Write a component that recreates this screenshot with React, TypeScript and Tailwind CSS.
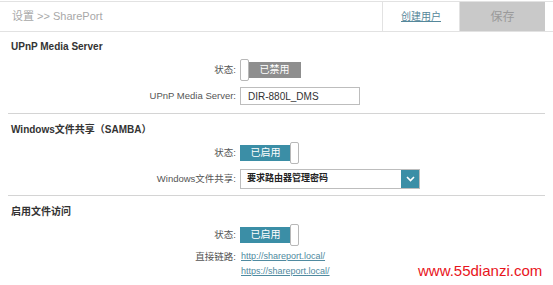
import React from "react";

const sans = { fontFamily: '"Liberation Sans", "Noto Sans CJK SC", Arial, sans-serif' };

function Toggle({ on }: { on: boolean }) {
  const knob = (
    <div className="w-[9px] h-[22px] bg-white border border-[#b8b8b8] rounded-[2px] shrink-0 z-10" />
  );
  return (
    <div className="flex items-center h-full">
      {!on && knob}
      <div
        className={
          (on ? "bg-[#3b8ea6] w-[51px]" : "bg-[#8e8e8e] w-[53px] -ml-[1px]") +
          " h-[16px] flex items-center justify-center text-white text-[10px] leading-none"
        }
      >
        {on ? "已启用" : "已禁用"}
      </div>
      {on && <div className="-ml-[1px]">{knob}</div>}
    </div>
  );
}

function Row({
  label,
  children,
  className = "",
}: {
  label: string;
  children?: React.ReactNode;
  className?: string;
}) {
  return (
    <div className={"flex items-center " + className}>
      <div className="w-[240px] pr-[4px] text-right text-[9.5px] text-[#555] leading-none">{label}</div>
      <div className="flex items-center h-full">{children}</div>
    </div>
  );
}

function Title({ text }: { text: string }) {
  return (
    <div className="h-[30px] flex items-center pl-[11px] text-[10px] font-bold text-[#333]">{text}</div>
  );
}

export default function App() {
  return (
    <div className="relative w-[553px] h-[285px] bg-white overflow-hidden" style={sans}>
      {/* header */}
      <div className="mt-[1px] h-[31px] border-t border-b border-[#e2e2e2] flex">
        <div className="flex-1 flex items-center pl-[12px] text-[11px] text-[#a8a8a8]">设置 &gt;&gt; SharePort</div>
        <div className="w-[78px] border-l border-r border-[#e2e2e2] flex items-center justify-center text-[10px] text-[#55879a] underline">
          创建用户
        </div>
        <div className="w-[85px] bg-[#c9c9c9] flex items-center justify-center text-[12px] text-[#9a9a9a]">保存</div>
        <div className="w-[8px]" />
      </div>

      {/* UPnP */}
      <div className="h-[28px] flex items-center pl-[11px] text-[10px] font-bold text-[#333]">UPnP Media Server</div>
      <Row label="状态:" className="h-[20px]">
        <Toggle on={false} />
      </Row>
      <Row label="UPnP Media Server:" className="h-[18px] mt-[7px]">
        <div className="w-[120px] h-[18px] border border-[#bdbdbd] flex items-center pl-[7px] text-[10px] text-[#333]">
          DIR-880L_DMS
        </div>
      </Row>
      <div className="mx-[8px] mt-[8px] border-t border-[#d4d4d4]" />

      {/* SAMBA */}
      <Title text="Windows文件共享（SAMBA）" />
      <Row label="状态:" className="h-[18px]">
        <Toggle on />
      </Row>
      <Row label="Windows文件共享:" className="h-[18px] mt-[8px]">
        <div className="w-[180px] h-[20px] border border-[#bdbdbd] flex items-center">
          <div className="flex-1 pl-[6px] text-[9px] text-[#222] font-bold">要求路由器管理密码</div>
          <div className="w-[18px] h-full bg-[#3b8ea6] flex items-center justify-center">
            <svg width="9" height="6" viewBox="0 0 9 6">
              <path d="M1 1 L4.5 4.5 L8 1" stroke="white" strokeWidth="1.6" fill="none" />
            </svg>
          </div>
        </div>
      </Row>
      <div className="mx-[8px] mt-[7px] border-t border-[#d4d4d4]" />

      {/* file access */}
      <Title text="启用文件访问" />
      <Row label="状态:" className="h-[18px]">
        <Toggle on />
      </Row>
      <Row label="直接链路:" className="h-[14px] mt-[6px]">
        <span className="text-[9px] text-[#4f8aa0] underline pl-[1px]">http://shareport.local/</span>
      </Row>
      <Row label="" className="h-[14px] mt-[1px]">
        <span className="text-[9px] text-[#4f8aa0] underline pl-[1px]">https://shareport.local/</span>
      </Row>

      {/* watermark */}
      <div
        className="absolute left-[418px] top-[263px] text-[15px] leading-none text-[#e8141c]"
        style={{ fontFamily: '"Liberation Sans", Arial, sans-serif' }}
      >
        www.55dianzi.com
      </div>
    </div>
  );
}
